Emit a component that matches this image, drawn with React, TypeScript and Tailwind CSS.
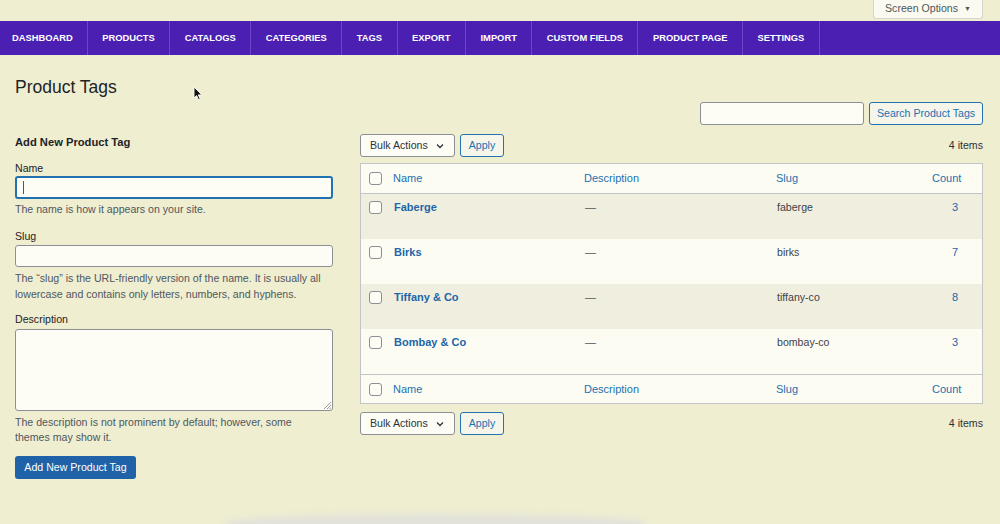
import React from "react";

const navItems = [
  "DASHBOARD",
  "PRODUCTS",
  "CATALOGS",
  "CATEGORIES",
  "TAGS",
  "EXPORT",
  "IMPORT",
  "CUSTOM FIELDS",
  "PRODUCT PAGE",
  "SETTINGS",
];

const rows = [
  { name: "Faberge", slug: "faberge", count: "3" },
  { name: "Birks", slug: "birks", count: "7" },
  { name: "Tiffany & Co", slug: "tiffany-co", count: "8" },
  { name: "Bombay & Co", slug: "bombay-co", count: "3" },
];

function Checkbox() {
  return <span className="block w-[13px] h-[13px] rounded-[3px] border border-[#8c8f94] bg-[#fdfdf6]" />;
}

function Chevron() {
  return (
    <svg width="10" height="10" viewBox="0 0 10 10" className="ml-[7px]">
      <path d="M2 3.5 L5 6.5 L8 3.5" fill="none" stroke="#2c3338" strokeWidth="1.3" />
    </svg>
  );
}

function TableNav() {
  return (
    <div className="flex items-center h-[23px]">
      <div className="flex items-center h-[23px] w-[95px] pl-[9px] rounded-[3px] border border-[#8c8f94] bg-[#fdfdf6] text-[10.6px] text-[#2c3338]">
        <span>Bulk Actions</span>
        <Chevron />
      </div>
      <div className="ml-[5px] flex items-center justify-center h-[23px] w-[44px] rounded-[3px] border border-[#2271b1] bg-[#f5f5ea] text-[10.6px] text-[#2271b1]">
        Apply
      </div>
      <div className="ml-auto text-[10.6px] text-[#2c3338]">4 items</div>
    </div>
  );
}

function HeaderRow({ top }: { top: boolean }) {
  return (
    <div
      className={
        "grid grid-cols-[33px_191px_192px_1fr_84px] items-center bg-[#fcfcf3] text-[11px] text-[#2271b1] " +
        (top ? "h-[30px] border-b border-[#c3c4c7]" : "h-[29px] border-t border-[#c3c4c7]")
      }
    >
      <div className="pl-[8px]">
        <Checkbox />
      </div>
      <div className="-ml-[1px]">Name</div>
      <div className="-ml-[1px]">Description</div>
      <div className="-ml-[1px]">Slug</div>
      <div className="pl-[34px]">Count</div>
    </div>
  );
}

export default function App() {
  return (
    <div className="relative w-[1000px] h-[524px] overflow-hidden bg-[#efeed1] font-['Liberation_Sans',Arial,sans-serif]">
      {/* Screen options */}
      <div className="h-[21px] flex justify-end pr-[17px]">
        <div className="h-[19px] w-[110px] flex items-center justify-center gap-[6px] border border-t-0 border-[#d6d6d0] rounded-b-[3px] bg-[#fafaf0] text-[10.6px] text-[#50575e]">
          <span>Screen Options</span>
          <span className="text-[7px]">▼</span>
        </div>
      </div>

      {/* Nav bar */}
      <div className="h-[34px] bg-[#4b1fb2] flex items-stretch">
        {navItems.map((item, i) => (
          <div
            key={item}
            className={
              "flex items-center border-r border-[#6a48c9] text-white font-bold text-[9.35px] " +
              (i === 0 ? "pl-[12px] pr-[14px]" : "px-[14.5px]")
            }
          >
            {item}
          </div>
        ))}
      </div>

      <div className="px-[15px]">
        <h1 className="mt-[21px] h-[23px] leading-[23px] text-[17.5px] text-[#1d2327]">Product Tags</h1>

        <div className="mt-[3px] flex justify-end gap-[5px] pr-[2px]">
          <div className="h-[23px] w-[164px] rounded-[3px] border border-[#8c8f94] bg-[#fdfdf6]" />
          <div className="h-[23px] w-[114px] flex items-center justify-center rounded-[3px] border border-[#2271b1] bg-[#f5f5ea] text-[10.6px] text-[#2271b1]">
            Search Product Tags
          </div>
        </div>

        <div className="flex">
          {/* Left column */}
          <div className="w-[318px] flex flex-col">
            <h2 className="mt-[10px] leading-[14px] text-[11.2px] font-bold text-[#1d2327]">Add New Product Tag</h2>

            <label className="mt-[12px] leading-[14px] text-[10.6px] text-[#1d2327]">Name</label>
            <div className="mt-[1px] h-[23px] rounded-[3px] border-2 border-[#2271b1] bg-[#fdfdf6] flex items-center pl-[6px]">
              <span className="block w-[1px] h-[13px] bg-[#50575e]" />
            </div>
            <p className="mt-[2px] leading-[16px] text-[10.6px] text-[#50575e]">The name is how it appears on your site.</p>

            <label className="mt-[12px] leading-[14px] text-[10.6px] text-[#1d2327]">Slug</label>
            <div className="mt-[2px] h-[22px] rounded-[3px] border border-[#8c8f94] bg-[#fdfdf6]" />
            <p className="mt-[3px] leading-[16px] text-[10.6px] text-[#50575e]">
              The “slug” is the URL-friendly version of the name. It is usually all lowercase and contains only letters, numbers, and hyphens.
            </p>

            <label className="mt-[10px] leading-[14px] text-[10.6px] text-[#1d2327]">Description</label>
            <div className="relative mt-[3px] h-[82px] rounded-[3px] border border-[#8c8f94] bg-[#fdfdf6]">
              <svg width="8" height="8" viewBox="0 0 8 8" className="absolute right-[1px] bottom-[1px]">
                <path d="M8 1 L1 8 M8 4 L4 8 M8 6.5 L6.5 8" stroke="#8c8f94" strokeWidth="0.9" />
              </svg>
            </div>
            <p className="mt-[4px] leading-[15px] text-[10.6px] text-[#50575e] pr-[20px]">
              The description is not prominent by default; however, some themes may show it.
            </p>

            <div className="mt-[11px] h-[23px] w-[121px] flex items-center justify-center rounded-[3px] bg-[#1f62a8] text-[10.6px] text-white">
              Add New Product Tag
            </div>
          </div>

          {/* Right column */}
          <div className="ml-[27px] flex-1 flex flex-col pr-[2px]">
            <div className="mt-[9px]">
              <TableNav />
            </div>

            <div className="mt-[6px] border border-[#c3c4c7] bg-[#fcfcf3]">
              <HeaderRow top />
              {rows.map((r, i) => (
                <div
                  key={r.name}
                  className={
                    "grid grid-cols-[33px_191px_192px_1fr_84px] items-start h-[45px] pt-[6px] text-[11px] " +
                    (i % 2 === 0 ? "bg-[#f0efdf]" : "bg-[#fcfcf3]")
                  }
                >
                  <div className="pl-[8px] pt-[1px]">
                    <Checkbox />
                  </div>
                  <div className="font-bold text-[#2265a8] leading-[14px]">{r.name}</div>
                  <div className="text-[#50575e] leading-[14px]">—</div>
                  <div className="text-[#3c434a] leading-[14px] text-[10.6px]">{r.slug}</div>
                  <div className="pl-[54px] text-[#2265a8] leading-[14px]">{r.count}</div>
                </div>
              ))}
              <HeaderRow top={false} />
            </div>

            <div className="mt-[8px]">
              <TableNav />
            </div>
          </div>
        </div>
      </div>

      {/* Mouse cursor */}
      <svg width="10" height="15" viewBox="0 0 10 15" className="absolute left-[193px] top-[86px]">
        <path d="M1 1 L1 12 L3.6 9.6 L5.6 13.8 L7.2 13 L5.3 8.9 L8.8 8.9 Z" fill="#111" stroke="#fff" strokeWidth="0.9" />
      </svg>

      {/* bottom blur */}
      <div className="absolute left-[225px] bottom-[-8px] w-[420px] h-[18px] rounded-t-[50%] bg-[#e2e1da] blur-[3px]" />
    </div>
  );
}
